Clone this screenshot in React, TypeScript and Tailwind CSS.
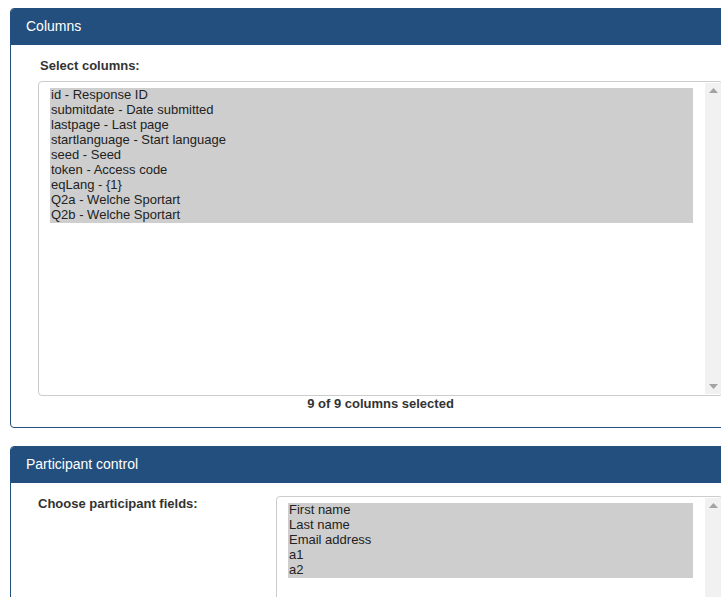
const columns = [
  'id - Response ID',
  'submitdate - Date submitted',
  'lastpage - Last page',
  'startlanguage - Start language',
  'seed - Seed',
  'token - Access code',
  'eqLang - {1}',
  'Q2a - Welche Sportart',
  'Q2b - Welche Sportart',
];

const participantFields = ['First name', 'Last name', 'Email address', 'a1', 'a2'];

function Scrollbar() {
  return (
    <div className="w-[17px] my-[1px] bg-[#f1f1f1] flex flex-col justify-between items-center py-[5px]">
      <svg width="9" height="5" viewBox="0 0 9 5">
        <path d="M0 5 L4.5 0 L9 5 Z" fill="#a3a3a3" />
      </svg>
      <svg width="9" height="5" viewBox="0 0 9 5">
        <path d="M0 0 L4.5 5 L9 0 Z" fill="#a3a3a3" />
      </svg>
    </div>
  );
}

function MultiSelect({ items, height, width }: { items: string[]; height: string; width: string }) {
  return (
    <div className={`flex border border-[#cccccc] rounded-[4px] bg-white ${height} ${width}`}>
      <div className="flex-1 pt-[6px] pl-[11px] pr-[12px]">
        <div className="bg-[#cecece]">
          {items.map(item => (
            <div key={item} className="h-[15px] leading-[13px] text-[13px] text-[#222] px-[1px] whitespace-nowrap">
              {item}
            </div>
          ))}
        </div>
      </div>
      <Scrollbar />
    </div>
  );
}

function PanelHeader({ title }: { title: string }) {
  return (
    <div className="h-[36px] bg-[#224f7d] flex items-center px-[15px] pb-[1px] text-white text-[14px] rounded-t-[3px]">
      {title}
    </div>
  );
}

export default function App() {
  return (
    <div
      className="w-[721px] h-[597px] overflow-hidden bg-white"
      style={{ fontFamily: '"Liberation Sans", Arial, sans-serif' }}
    >
      <div className="w-[760px] pt-[8px] pl-[10px] flex flex-col gap-[18px]">
        <div className="border border-[#224f7d] rounded-[4px]">
          <PanelHeader title="Columns" />
          <div className="pl-[27px] pt-[12px] pb-[15px]">
            <div className="pl-[2px] text-[13px] font-bold text-[#333] leading-[18px] mb-[6px]">Select columns:</div>
            <MultiSelect items={columns} height="h-[315px]" width="w-[685px]" />
            <div className="w-[685px] text-center text-[13px] font-bold text-[#333] leading-[16px]">
              9 of 9 columns selected
            </div>
          </div>
        </div>

        <div className="border border-[#224f7d] rounded-[4px] h-[200px]">
          <PanelHeader title="Participant control" />
          <div className="flex items-start pl-[27px] pt-[12px]">
            <div className="w-[238px] text-[13px] font-bold text-[#333] leading-[18px]">
              Choose participant fields:
            </div>
            <div className="mt-[1px]">
              <MultiSelect items={participantFields} height="h-[120px]" width="w-[447px]" />
            </div>
          </div>
        </div>
      </div>
    </div>
  );
}
